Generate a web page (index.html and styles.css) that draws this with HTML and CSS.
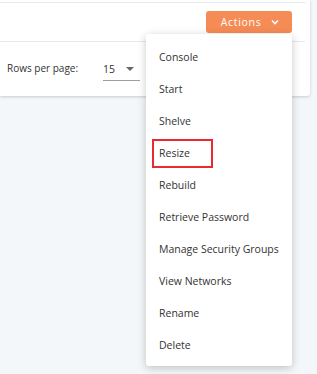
FILE: index.html
```html
<!DOCTYPE html>
<html lang="en">

<head>
    <meta charset="UTF-8">
    <meta name="viewport" content="width=device-width, initial-scale=1.0">
    <title>Instances - Actions</title>
    <link rel="stylesheet" href="styles.css">
</head>

<body>
    <div class="page">
        <div class="card">
            <div class="card-top"></div>
            <div class="toolbar">
                <div class="actions">
                    <button class="actions-button" type="button">
                        Actions
                        <svg class="chevron" width="8" height="6" viewBox="0 0 8 6">
                            <path d="M1 1.5 L4 4.5 L7 1.5" fill="none" stroke="#fff" stroke-width="1.6"/>
                        </svg>
                    </button>
                    <ul class="actions-menu">
                        <li>Console</li>
                        <li>Start</li>
                        <li>Shelve</li>
                        <li><span class="marked">Resize</span></li>
                        <li>Rebuild</li>
                        <li>Retrieve Password</li>
                        <li>Manage Security Groups</li>
                        <li>View Networks</li>
                        <li>Rename</li>
                        <li>Delete</li>
                    </ul>
                </div>
            </div>
            <div class="pager">
                <span class="pager-label">Rows per page:</span>
                <div class="rows-select">
                    <span>15</span>
                    <span class="caret"></span>
                </div>
            </div>
        </div>
    </div>
</body>

</html>
```

FILE: styles.css
```css
* {
    margin: 0;
    padding: 0;
    box-sizing: border-box;
}

body {
    font-family: 'Open Sans', 'Noto Sans', sans-serif;
    font-size: 10.5px;
    background-color: #f4f7f9;
    color: #333;
}

.page {
    width: 317px;
    height: 374px;
    overflow: hidden;
}

.card {
    width: 310px;
    padding-right: 5px;
    background-color: #ffffff;
    border-radius: 0 0 3px 0;
    box-shadow: 0 1px 3px rgba(0, 0, 0, 0.18);
}

.card-top {
    height: 3px;
    border-bottom: 1px solid #e6e9eb;
}

.toolbar {
    height: 39px;
    display: flex;
    justify-content: flex-end;
    align-items: flex-start;
    padding: 8px 13px 0 0;
    border-bottom: 1px solid #e6e9eb;
}

.actions {
    position: relative;
}

.actions-button {
    width: 86px;
    height: 22px;
    display: flex;
    align-items: center;
    justify-content: center;
    gap: 10px;
    padding-left: 2px;
    background-color: #f58b55;
    color: #fff;
    border: none;
    border-radius: 3px;
    font-family: inherit;
    font-size: 10.5px;
    letter-spacing: 0.7px;
}

.chevron {
    display: block;
}

/* dropdown hangs below the button, right edges lined up */
.actions-menu {
    position: absolute;
    top: 23px;
    right: 0;
    width: 146px;
    padding: 7px 0 5px;
    list-style: none;
    background-color: #ffffff;
    border-radius: 3px;
    box-shadow: 0 2px 8px rgba(0, 0, 0, 0.22);
    z-index: 10;
}

.actions-menu li {
    height: 32px;
    display: flex;
    align-items: center;
    padding-left: 13px;
    color: #333;
    white-space: nowrap;
}

.marked {
    display: inline-flex;
    align-items: center;
    height: 29px;
    margin-left: -7px;
    padding: 0 21px 0 5px;
    border: 2px solid #ea2a2f;
}

.pager {
    height: 54px;
    display: flex;
    align-items: center;
    padding-left: 7px;
    padding-bottom: 2px;
    font-size: 10px;
}

.pager-label {
    width: 96px;
}

.rows-select {
    width: 37px;
    height: 22px;
    display: flex;
    align-items: center;
    justify-content: space-between;
    padding: 0 6px 0 0;
    margin-top: 3px;
    font-size: 10.5px;
    border-bottom: 1px solid #9e9e9e;
}

.caret {
    width: 0;
    height: 0;
    border-left: 4px solid transparent;
    border-right: 4px solid transparent;
    border-top: 4px solid #666;
}
```
